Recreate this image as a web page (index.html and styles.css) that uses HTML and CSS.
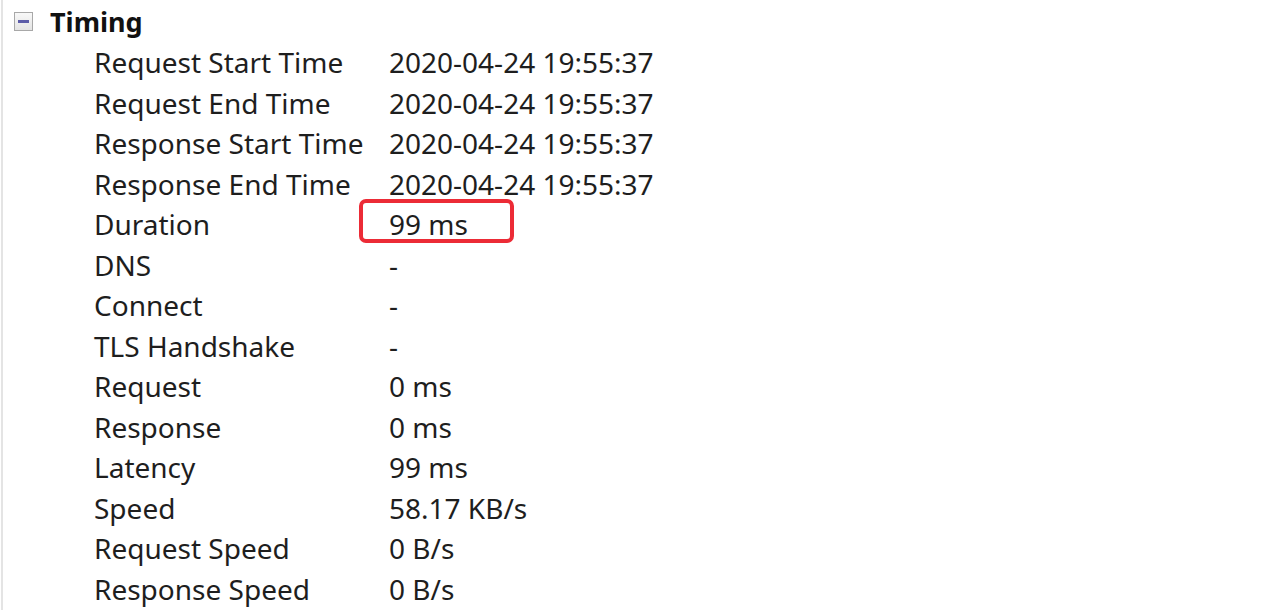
FILE: index.html
```html
<!DOCTYPE html>
<html>
<head>
<meta charset="utf-8">
<link rel="stylesheet" href="styles.css">
</head>
<body>
<div class="panel">
  <div class="group-head">
    <span class="toggle"><span class="minus"></span></span>
    <span class="group-title">Timing</span>
  </div>
  <div class="rows">
    <div class="row"><span class="label">Request Start Time</span><span class="value">2020-04-24 19:55:37</span></div>
    <div class="row"><span class="label">Request End Time</span><span class="value">2020-04-24 19:55:37</span></div>
    <div class="row"><span class="label">Response Start Time</span><span class="value">2020-04-24 19:55:37</span></div>
    <div class="row"><span class="label">Response End Time</span><span class="value">2020-04-24 19:55:37</span></div>
    <div class="row"><span class="label">Duration</span><span class="value highlighted">99 ms</span></div>
    <div class="row"><span class="label">DNS</span><span class="value">-</span></div>
    <div class="row"><span class="label">Connect</span><span class="value">-</span></div>
    <div class="row"><span class="label">TLS Handshake</span><span class="value">-</span></div>
    <div class="row"><span class="label">Request</span><span class="value">0 ms</span></div>
    <div class="row"><span class="label">Response</span><span class="value">0 ms</span></div>
    <div class="row"><span class="label">Latency</span><span class="value">99 ms</span></div>
    <div class="row"><span class="label">Speed</span><span class="value">58.17 KB/s</span></div>
    <div class="row"><span class="label">Request Speed</span><span class="value">0 B/s</span></div>
    <div class="row"><span class="label">Response Speed</span><span class="value">0 B/s</span></div>
  </div>
</div>
</body>
</html>
```
FILE: styles.css
```css
html, body {
  margin: 0;
  padding: 0;
  background: #ffffff;
}
body {
  font-family: "Noto Sans", "Open Sans", sans-serif;
  color: #1e1e1e;
  width: 1266px;
  height: 610px;
  overflow: hidden;
}
.panel {
  height: 610px;
  border-left: 2px solid #e4e4e4;
  margin-left: 1px;
  box-sizing: border-box;
}
.group-head {
  display: flex;
  align-items: center;
  height: 44px;
  padding-left: 11px;
}
.toggle {
  width: 17px;
  height: 17px;
  border: 1px solid #a8a8a8;
  background: linear-gradient(#f8f8f8, #e4e4e4);
  display: flex;
  align-items: center;
  justify-content: center;
  margin-top: -1px;
}
.minus {
  width: 11px;
  height: 3px;
  background: #5c5ca8;
}
.group-title {
  font-weight: 700;
  font-size: 27px;
  margin-left: 17px;
  color: #111;
  line-height: 44px;
  margin-top: -1px;
}
.rows {
  padding-left: 91px;
}
.row {
  display: flex;
  height: 40.5px;
  font-size: 28px;
  line-height: 40px;
}
.label {
  width: 295px;
  flex: none;
  margin-top: -2px;
}
.value {
  position: relative;
  margin-top: -2px;
}
.highlighted::before {
  content: "";
  position: absolute;
  left: -30px;
  top: -5px;
  width: 147px;
  height: 36px;
  border: 4px solid #ec2b36;
  border-radius: 7px;
}
```
